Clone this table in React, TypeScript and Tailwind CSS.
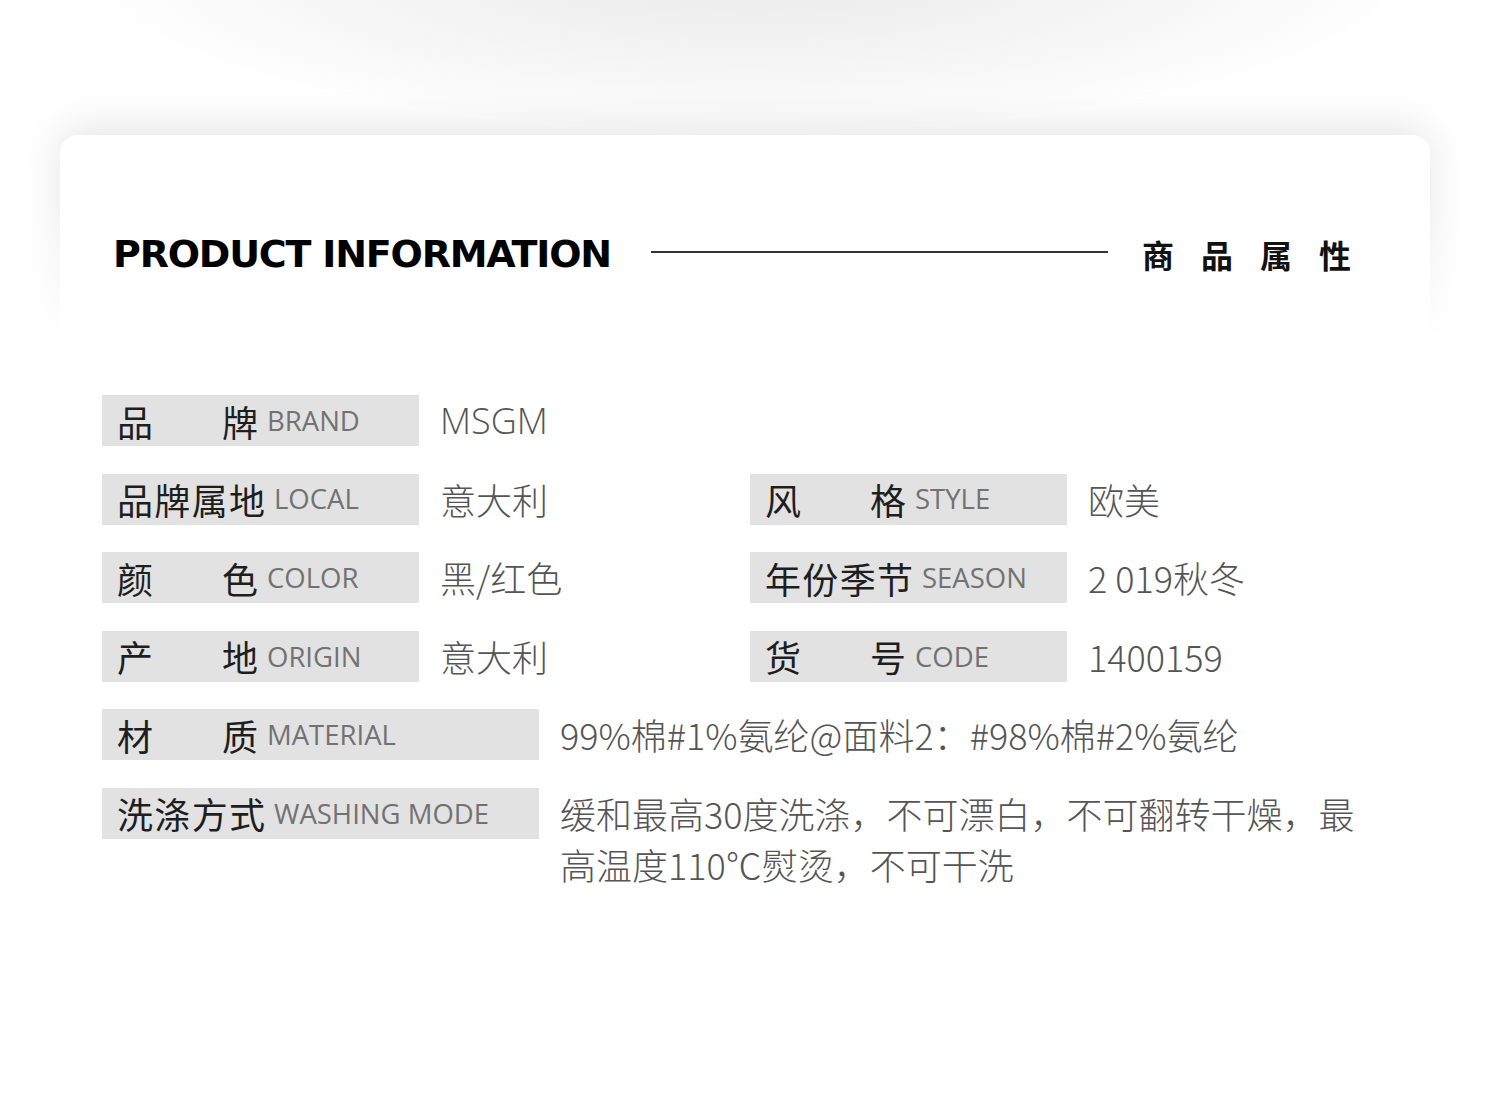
import React from "react";

const cn = '"Noto Sans CJK SC", sans-serif';
const latin = '"Open Sans", "Noto Sans CJK SC", sans-serif';

function Label({ zh, en, wide }: { zh: string; en: string; wide?: boolean }) {
  const chars = zh.split("");
  return (
    <div
      className={`flex h-[51px] shrink-0 items-center bg-[#e2e2e2] pl-[15px] ${wide ? "w-[437px]" : "w-[317px]"}`}
    >
      <div
        className={`flex justify-between text-[36px] leading-none text-[#1e1e1e] ${chars.length === 2 ? "w-[141px]" : "w-[148px]"}`}
        style={{ fontFamily: cn }}
      >
        {chars.map((c, i) => (
          <span key={i}>{c}</span>
        ))}
      </div>
      <span className="ml-[9px] text-[27.5px] leading-none text-[#727272]" style={{ fontFamily: latin }}>
        {en}
      </span>
    </div>
  );
}

function Value({ children, latinFont }: { children: React.ReactNode; latinFont?: boolean }) {
  return (
    <div
      className="ml-[21px] text-[36px] font-light leading-[51px] text-[#555]"
      style={{ fontFamily: latinFont ? latin : cn }}
    >
      {children}
    </div>
  );
}

function Cell({ zh, en, value, latinFont }: { zh: string; en: string; value: string; latinFont?: boolean }) {
  return (
    <div className="flex items-start">
      <Label zh={zh} en={en} />
      <Value latinFont={latinFont}>{value}</Value>
    </div>
  );
}

export default function App() {
  return (
    <div className="relative h-[1106px] w-full overflow-hidden bg-white">
      <div className="pointer-events-none absolute left-[100px] top-[-200px] h-[330px] w-[1300px] rounded-[50%] bg-[radial-gradient(ellipse_at_center,#e9e9e9_0%,#f4f4f4_40%,#ffffff_75%)]" />
      <div className="relative ml-[60px] mt-[135px] h-[260px] w-[1370px] rounded-t-[18px] bg-white shadow-[0_-8px_40px_rgba(0,0,0,0.10)]">
        <div className="relative z-10 flex items-center pl-[53px] pt-[100px]">
          <div
            className="text-[38px] font-bold leading-none tracking-[-1.2px] text-black"
            style={{ fontFamily: '"DejaVu Sans", sans-serif', fontWeight: 700 }}
          >
            PRODUCT INFORMATION
          </div>
          <div className="ml-[40px] mt-[-4px] h-[2px] w-[457px] bg-[#333]" />
          <div
            className="ml-[34px] text-[32px] font-bold leading-none tracking-[27px] text-[#111]"
            style={{ fontFamily: cn }}
          >
            商品属性
          </div>
        </div>
      </div>
      <div className="pointer-events-none absolute left-0 top-[200px] h-[280px] w-full bg-[linear-gradient(to_bottom,rgba(255,255,255,0)_0%,#ffffff_50%,#ffffff_100%)]" />

      <div className="absolute left-[102px] top-[395px] flex w-[1300px] flex-col gap-[27.6px]">
        <div className="grid grid-cols-[648px_1fr]">
          <Cell zh="品牌" en="BRAND" value="MSGM" latinFont />
        </div>
        <div className="grid grid-cols-[648px_1fr]">
          <Cell zh="品牌属地" en="LOCAL" value="意大利" />
          <Cell zh="风格" en="STYLE" value="欧美" />
        </div>
        <div className="grid grid-cols-[648px_1fr]">
          <Cell zh="颜色" en="COLOR" value="黑/红色" />
          <Cell zh="年份季节" en="SEASON" value="2 019秋冬" />
        </div>
        <div className="grid grid-cols-[648px_1fr]">
          <Cell zh="产地" en="ORIGIN" value="意大利" />
          <Cell zh="货号" en="CODE" value="1400159" />
        </div>
        <div className="flex items-start">
          <Label zh="材质" en="MATERIAL" wide />
          <Value>99%棉#1%氨纶@面料2：#98%棉#2%氨纶</Value>
        </div>
        <div className="flex items-start">
          <Label zh="洗涤方式" en="WASHING MODE" wide />
          <div className="w-[840px]">
            <Value>缓和最高30度洗涤，不可漂白，不可翻转干燥，最高温度110℃熨烫，不可干洗</Value>
          </div>
        </div>
      </div>
    </div>
  );
}
